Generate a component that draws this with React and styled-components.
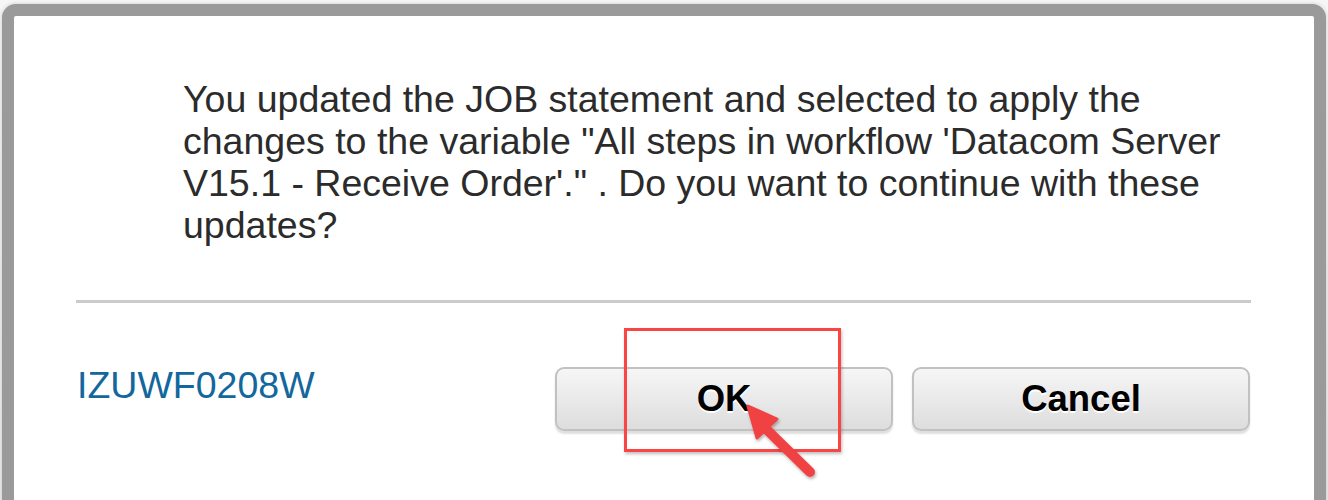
import React from "react";
import styled, { createGlobalStyle } from "styled-components";

const Global = createGlobalStyle`
  html, body { margin: 0; padding: 0; }
  body {
    background: #eeeeee;
    overflow: hidden;
    font-family: "Liberation Sans", Arial, sans-serif;
  }
`;

const Page = styled.div`
  width: 1328px;
  height: 500px;
  overflow: hidden;
  padding: 4px 0 0 2px;
  box-sizing: border-box;
  background: linear-gradient(#f6f6f6, #ececec);
`;

const Dialog = styled.div`
  width: 1324px;
  height: 560px;
  box-sizing: border-box;
  border: 12px solid #9a9a9a;
  border-radius: 14px 14px 0 0;
  background: #ffffff;
  box-shadow: 0 0 4px rgba(0, 0, 0, 0.18);
  padding-top: 62px;
`;

const Message = styled.p`
  margin: 0 0 0 169px;
  width: 1068px;
  font-size: 37.5px;
  line-height: 42px;
  color: #2b2b2b;
`;

const Divider = styled.hr`
  border: none;
  height: 3px;
  background: #cbcbcb;
  margin: 54px 63px 0 62px;
`;

const Footer = styled.div`
  display: flex;
  justify-content: space-between;
  align-items: flex-start;
  padding: 0 64px 0 63px;
  margin-top: 64px;
`;

const Code = styled.div`
  font-size: 37.5px;
  line-height: 42px;
  color: #13679c;
  margin-top: -3px;
`;

const Buttons = styled.div`
  display: flex;
  gap: 19px;
`;

const ButtonWrap = styled.div`
  position: relative;
`;

const Button = styled.button`
  width: 338px;
  height: 64px;
  box-sizing: border-box;
  border: 2px solid #c1c1c1;
  border-radius: 9px;
  background: linear-gradient(#f6f6f6, #dddddd);
  box-shadow: 0 3px 2px rgba(0, 0, 0, 0.13);
  font-family: "Liberation Sans", Arial, sans-serif;
  font-weight: bold;
  font-size: 36.5px;
  color: #000;
  text-shadow: 0 2px 0 #ffffff;
  padding: 0 0 1px;
  cursor: pointer;
`;

const Highlight = styled.div`
  position: absolute;
  left: 69px;
  top: -39px;
  width: 217px;
  height: 124px;
  box-sizing: border-box;
  border: 3px solid #fa4545;
  box-shadow: 1px 2px 3px rgba(0, 0, 0, 0.25);
  pointer-events: none;
`;

const Arrow = styled.svg`
  position: absolute;
  left: 180px;
  top: 30px;
  overflow: visible;
  pointer-events: none;
`;

export default function App() {
  return (
    <>
      <Global />
      <Page>
        <Dialog>
          <Message>
            You updated the JOB statement and selected to apply the changes to
            the variable "All steps in workflow 'Datacom Server V15.1 - Receive
            Order'." . Do you want to continue with these updates?
          </Message>
          <Divider />
          <Footer>
            <Code>IZUWF0208W</Code>
            <Buttons>
              <ButtonWrap>
                <Button>OK</Button>
                <Highlight />
                <Arrow width="90" height="90" viewBox="0 0 90 90">
                  <defs>
                    <filter id="sh" x="-30%" y="-30%" width="160%" height="160%">
                      <feDropShadow dx="1" dy="2" stdDeviation="1.5" floodColor="#000" floodOpacity="0.3" />
                    </filter>
                  </defs>
                  <g filter="url(#sh)">
                    <line x1="25" y1="26" x2="75" y2="75" stroke="#f04343" strokeWidth="10" strokeLinecap="round" />
                    <polygon points="13,9 42,22 22,41" fill="#f04343" stroke="#f04343" strokeWidth="3" strokeLinejoin="round" />
                  </g>
                </Arrow>
              </ButtonWrap>
              <ButtonWrap>
                <Button>Cancel</Button>
              </ButtonWrap>
            </Buttons>
          </Footer>
        </Dialog>
      </Page>
    </>
  );
}
